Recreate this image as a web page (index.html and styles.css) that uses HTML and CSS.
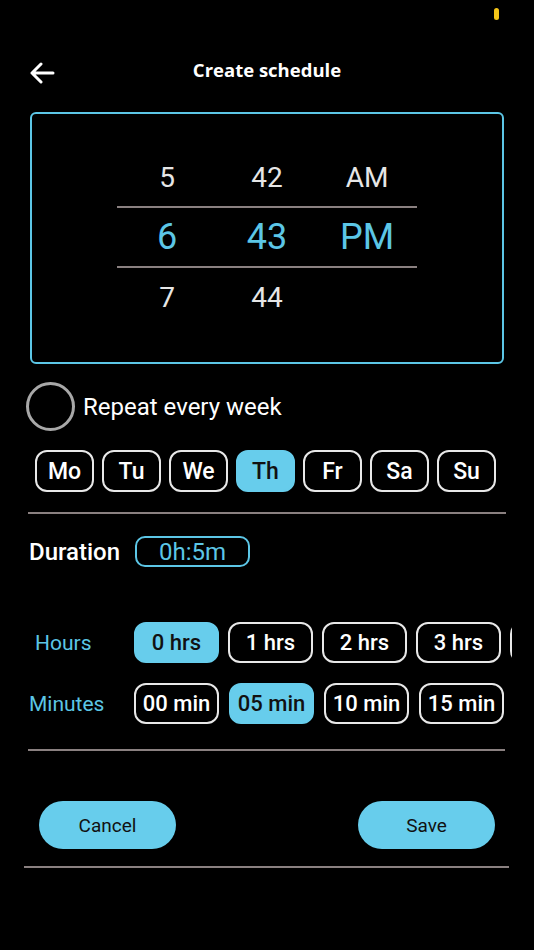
FILE: index.html
```html
<!DOCTYPE html>
<html lang="en">
<head>
    <meta name="viewport" content="width=device-width, initial-scale=1.0">
    <title>Create schedule</title>
    <link rel="stylesheet" href="styles.css">
</head>
<body>
<div class="m-status"><span class="m-dot"></span></div>
<div class="m-header">
    <svg class="m-return" width="26" height="22" viewBox="0 0 26 22"><path d="M24 11H3M12 2L3 11l9 9" fill="none" stroke="#fff" stroke-width="3" stroke-linecap="round" stroke-linejoin="round"/></svg>
    <h2>Create schedule</h2>
</div>

<div class="m-picker">
    <div class="m-wheel">
        <div class="m-row">
            <span>5</span><span>42</span><span>AM</span>
        </div>
        <div class="m-row m-active">
            <span>6</span><span>43</span><span>PM</span>
        </div>
        <div class="m-row">
            <span>7</span><span>44</span><span></span>
        </div>
    </div>
</div>

<div class="m-repeat">
    <span class="m-radio"></span>
    <span>Repeat every week</span>
</div>

<div class="m-days">
    <span class="m-chip">Mo</span>
    <span class="m-chip">Tu</span>
    <span class="m-chip">We</span>
    <span class="m-chip on">Th</span>
    <span class="m-chip">Fr</span>
    <span class="m-chip">Sa</span>
    <span class="m-chip">Su</span>
</div>

<div class="m-division"></div>

<div class="m-duration">
    <span>Duration</span>
    <span class="m-total">0h:5m</span>
</div>

<div class="m-choose">
    <div class="m-line">
        <span class="m-label">Hours</span>
        <div class="m-scroll">
            <span class="m-opt on">0 hrs</span>
            <span class="m-opt">1 hrs</span>
            <span class="m-opt">2 hrs</span>
            <span class="m-opt">3 hrs</span>
            <span class="m-opt"></span>
        </div>
    </div>
    <div class="m-line m-min">
        <span class="m-label">Minutes</span>
        <div class="m-scroll">
            <span class="m-opt">00 min</span>
            <span class="m-opt on">05 min</span>
            <span class="m-opt">10 min</span>
            <span class="m-opt">15 min</span>
        </div>
    </div>
</div>

<div class="m-division m-div2"></div>

<div class="m-actions">
    <button class="m-btn">Cancel</button>
    <button class="m-btn">Save</button>
</div>
<div class="m-division m-div3"></div>
</body>
</html>
```

FILE: styles.css
```css
html{margin: 0; padding: 0;}
body{margin: 0; padding: 0; width: 534px; height: 950px; background: #000; color: #fff; font-family: Roboto, "Noto Sans", sans-serif; overflow: hidden;}

.m-status{height: 50px; position: relative;}
.m-dot{position: absolute; top: 8px; left: 494px; width: 5px; height: 12px; border-radius: 3px; background: #f5c518;}

.m-header{position: relative; height: 45px; display: flex; align-items: center; justify-content: center;}
.m-header h2{margin: 0; font-family: "Open Sans", "Noto Sans", sans-serif; font-weight: 700; font-size: 18.5px; margin-top: -6px;}
.m-return{position: absolute; left: 29px; top: 12px;}

.m-picker{margin: 17px 0 0 30px; width: 470px; height: 248px; border: 2px solid #5cc6e6; border-radius: 6px; display: flex; justify-content: center; align-items: center;}
.m-wheel{width: 300px; margin-top: -2px;}
.m-row{display: grid; grid-template-columns: 100px 100px 100px; height: 58px; align-items: center; text-align: center; font-size: 28px; color: #e6e6e6;}
.m-active{border-top: 2px solid #8a8080; border-bottom: 2px solid #8a8080; font-size: 36px; color: #5cc6e6;}
.m-row span{display: block;}

.m-repeat{display: flex; align-items: center; gap: 8px; margin: 18px 0 0 26px; font-size: 24px;}
.m-radio{width: 43px; height: 43px; border: 3px solid #a8a8a8; border-radius: 50%;}

.m-days{display: flex; gap: 8px; margin: 19px 0 0 35px;}
.m-chip{width: 55px; height: 38px; border: 2px solid #e8e8e8; border-radius: 12px; display: flex; align-items: center; justify-content: center; font-size: 23px; font-weight: 500;}
.m-chip.on{background: #67cdec; border-color: #67cdec; color: #111;}

.m-division{height: 2px; background: #8a8080; margin: 20px 28px 0 28px;}

.m-duration{display: flex; align-items: center; gap: 15px; margin: 22px 0 0 29px; font-size: 24px; font-weight: 500;}
.m-total{width: 111px; height: 27px; border: 2px solid #5cc6e6; border-radius: 10px; color: #5cc6e6; font-weight: 400; display: flex; align-items: center; justify-content: center;}

.m-choose{margin-top: 54px;}
.m-line{display: flex; align-items: center; height: 43px;}
.m-min{margin-top: 18px;}
.m-label{width: 105px; padding-left: 35px; color: #5cc6e6; font-size: 21px; box-sizing: border-box; flex: none;}
.m-min .m-label{padding-left: 29px;}
.m-scroll{display: flex; gap: 9px; overflow: hidden; width: 378px; margin-left: 29px; flex: none;}
.m-min .m-scroll{gap: 10px; width: 380px;}
.m-opt{flex: none; width: 81px; height: 37px; border: 2px solid #e8e8e8; border-radius: 12px; display: flex; align-items: center; justify-content: center; font-size: 22px; font-weight: 500;}
.m-opt.on{background: #67cdec; border-color: #67cdec; color: #111;}

.m-div2{margin: 24px 29px 0 28px;}

.m-actions{display: flex; justify-content: space-between; margin: 50px 39px 0 39px;}
.m-btn{width: 137px; height: 48px; border: none; border-radius: 24px; background: #67cdec; color: #111; font-family: Roboto, "Noto Sans", sans-serif; font-size: 19px; font-weight: 400;}

.m-div3{margin: 17px 25px 0 24px;}
```
